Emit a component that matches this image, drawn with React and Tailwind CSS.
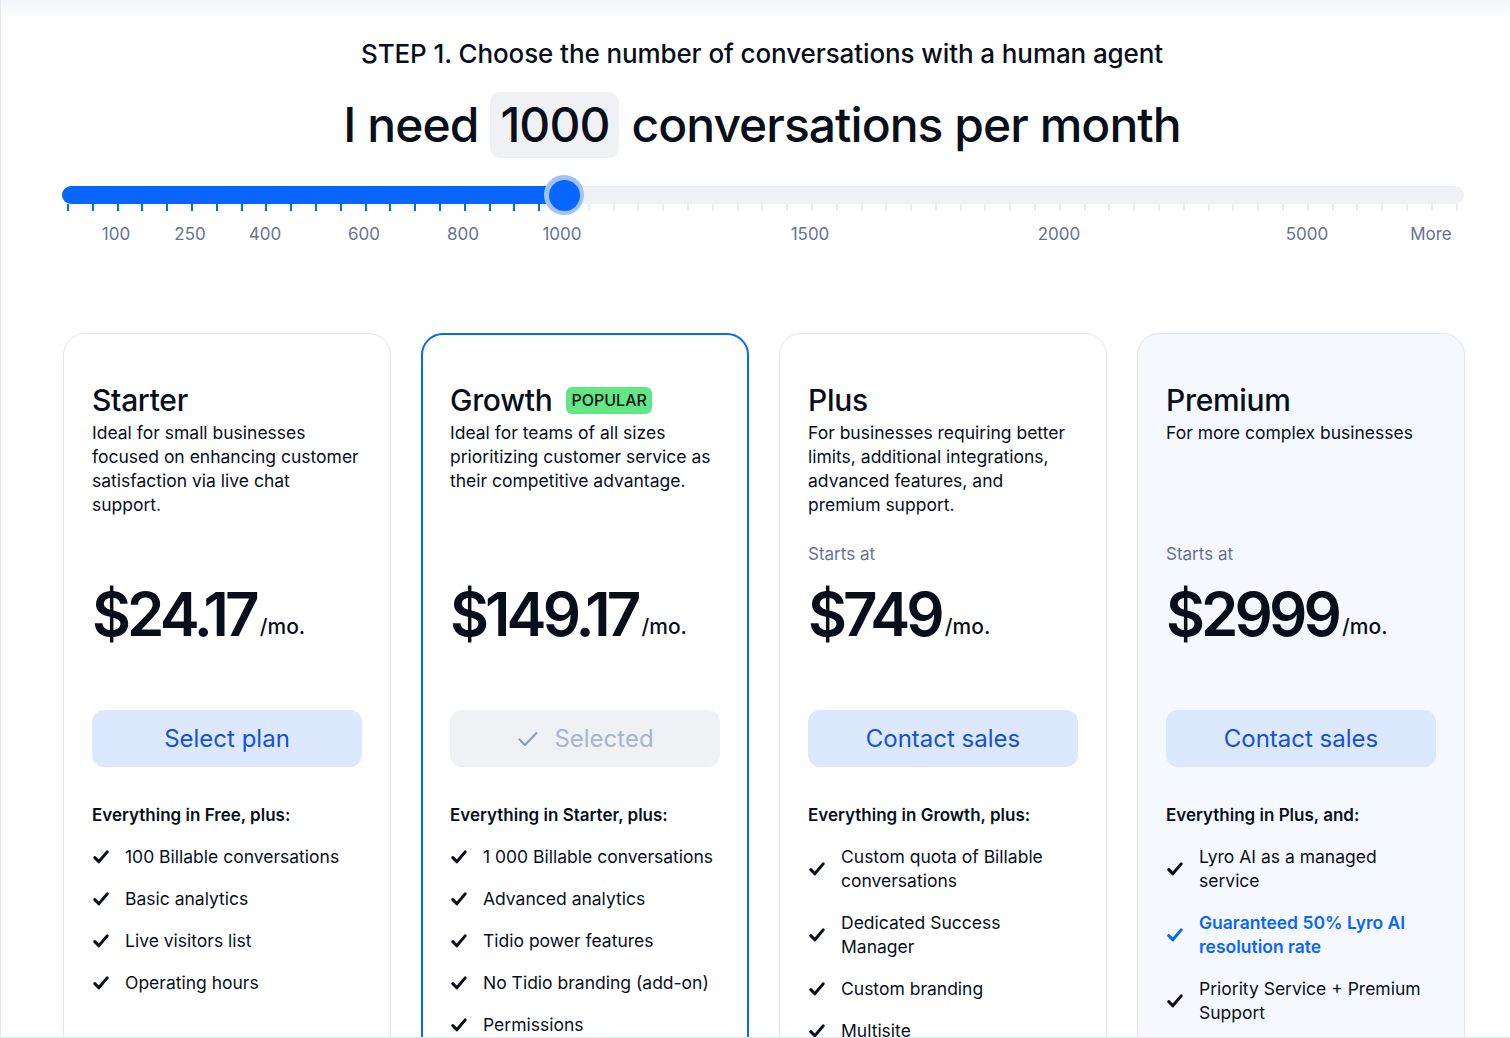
import React from "react";

const labels = [
  { t: "100", x: 54 },
  { t: "250", x: 128 },
  { t: "400", x: 203 },
  { t: "600", x: 302 },
  { t: "800", x: 401 },
  { t: "1000", x: 500 },
  { t: "1500", x: 748 },
  { t: "2000", x: 997 },
  { t: "5000", x: 1245 },
  { t: "More", x: 1369 },
];

function Check({ blue }) {
  return (
    <svg width="16" height="16" viewBox="0 0 16 16" fill="none" className="shrink-0">
      <path
        d="M1.8 8.6 L5.8 12.8 L14.2 2.9"
        stroke={blue ? "#0866ff" : "#080f1a"}
        strokeWidth="3"
        strokeLinecap="round"
        strokeLinejoin="round"
      />
    </svg>
  );
}

const plans = [
  {
    name: "Starter",
    desc: "Ideal for small businesses focused on enhancing customer satisfaction via live chat support.",
    starts: false,
    price: "$24.17",
    btn: "Select plan",
    head: "Everything in Free, plus:",
    items: ["100 Billable conversations", "Basic analytics", "Live visitors list", "Operating hours"],
  },
  {
    name: "Growth",
    popular: true,
    selected: true,
    desc: "Ideal for teams of all sizes prioritizing customer service as their competitive advantage.",
    starts: false,
    price: "$149.17",
    btn: "Selected",
    head: "Everything in Starter, plus:",
    items: [
      "1 000 Billable conversations",
      "Advanced analytics",
      "Tidio power features",
      "No Tidio branding (add-on)",
      "Permissions",
      "Integrations",
    ],
  },
  {
    name: "Plus",
    desc: "For businesses requiring better limits, additional integrations, advanced features, and premium support.",
    starts: true,
    price: "$749",
    btn: "Contact sales",
    head: "Everything in Growth, plus:",
    items: ["Custom quota of Billable conversations", "Dedicated Success Manager", "Custom branding", "Multisite"],
  },
  {
    name: "Premium",
    tinted: true,
    desc: "For more complex businesses",
    starts: true,
    price: "$2999",
    btn: "Contact sales",
    head: "Everything in Plus, and:",
    items: [
      "Lyro AI as a managed service",
      { t: "Guaranteed 50% Lyro AI resolution rate", blue: true },
      "Priority Service + Premium Support",
    ],
  },
];

function Card({ p }) {
  const border = p.selected
    ? "border-2 border-[#0866ff] px-[27px] pt-[47px]"
    : "border border-[#e1e6ee] px-[28px] pt-[48px]";
  const bg = p.tinted ? "bg-[#f5f8fe]" : "bg-white";
  return (
    <div className={`w-[328px] h-[760px] shrink-0 rounded-[22px] ${border} ${bg}`}>
      <div className="flex items-center gap-[14px] h-[36px]">
        <div className="text-[30px] leading-[36px] font-medium text-[#080f1a] tracking-[-0.01em]">{p.name}</div>
        {p.popular && (
          <div className="h-[27px] px-[5px] rounded-[6px] bg-[#5fe884] text-[16px] leading-[27px] font-medium text-[#080f1a]">
            POPULAR
          </div>
        )}
      </div>
      <div className="mt-[3px] h-[96px] text-[17.5px] leading-[24px] text-[#080f1a]">{p.desc}</div>
      <div className="mt-[25px] h-[24px] text-[17px] leading-[24px] text-[#647491]">{p.starts ? "Starts at" : ""}</div>
      <div className="mt-[13px] h-[70px] flex items-end gap-[4px]">
        <span className="text-[60px] leading-[70px] font-semibold tracking-[-0.065em] text-[#080f1a]">{p.price}</span>
        <span className="text-[21px] leading-[24px] mb-[10px] font-medium text-[#080f1a]">/mo.</span>
      </div>
      <div className="mt-[61px]">
        {p.selected ? (
          <div className="h-[57px] rounded-[12px] bg-[#eff1f5] flex items-center justify-center gap-[14px] text-[24px] text-[#a9b5cb]">
            <svg width="24" height="24" viewBox="0 0 24 24" fill="none">
              <path d="M3.5 12.5 L9 18 L20.5 6" stroke="#8d9bb5" strokeWidth="2.2" strokeLinecap="round" strokeLinejoin="round" />
            </svg>
            <span>Selected</span>
          </div>
        ) : (
          <div className="h-[57px] rounded-[12px] bg-[#dbe8fd] flex items-center justify-center text-[24px] text-[#1651d6]">
            {p.btn}
          </div>
        )}
      </div>
      <div className="mt-[36px] text-[17px] leading-[24px] font-semibold text-[#080f1a]">{p.head}</div>
      <div className="mt-[18px] flex flex-col gap-[18px]">
        {p.items.map((it, i) => {
          const t = typeof it === "string" ? it : it.t;
          const blue = typeof it !== "string" && it.blue;
          return (
            <div key={i} className="flex items-center gap-[16px] pl-[1px]">
              <Check blue={blue} />
              <div
                className={`w-[234px] text-[17.5px] leading-[24px] ${
                  blue ? "text-[#0866ff] font-semibold" : "text-[#080f1a]"
                }`}
              >
                {t}
              </div>
            </div>
          );
        })}
      </div>
    </div>
  );
}

export default function App() {
  const ticks = Array.from({ length: 57 }, (_, i) => i);
  return (
    <div
      className="h-[1038px] overflow-hidden bg-[linear-gradient(to_bottom,#f2f4f7,#ffffff_18px)] border-l border-b border-[#e2e8f2]"
      style={{ fontFamily: "Inter, 'Noto Sans', sans-serif" }}
    >
      <div className="pt-[38px] pl-[13px] text-center text-[26px] leading-[32px] font-medium text-[#080f1a] tracking-[-0.004em]">
        STEP 1. Choose the number of conversations with a human agent
      </div>
      <div className="mt-[22px] pl-[13px] flex items-center justify-center gap-[12px] text-[48px] leading-[66px] font-medium text-[#080f1a] tracking-[-0.02em]">
        <span>I need</span>
        <span className="h-[66px] px-[10px] rounded-[10px] bg-[#f0f1f5]">1000</span>
        <span>conversations per month</span>
      </div>

      <div className="ml-[61px] w-[1402px] mt-[28px]">
        <div className="relative h-[18px] rounded-full bg-[#eff1f5]">
          <div className="absolute left-0 top-0 h-[18px] w-[502px] rounded-l-full bg-[#0866ff]" />
          <div className="absolute top-full left-0 right-0 flex justify-between pl-[5px] pr-[6px]">
            {ticks.map((i) => (
              <div key={i} className={`w-[2px] h-[7px] ${i <= 20 ? "bg-[#0866ff]" : "bg-[#e9ecf1]"}`} />
            ))}
          </div>
          <div className="absolute left-[482px] top-[-11px] w-[40px] h-[40px] rounded-full bg-[#a2c2fd] flex items-center justify-center">
            <div className="w-[31px] h-[31px] rounded-full bg-[#0866ff]" />
          </div>
        </div>
        <div className="relative h-[46px] mt-[4px] text-[17px] text-[#647491]">
          {labels.map((l) => (
            <span
              key={l.t}
              className="absolute top-[14px] -translate-x-1/2 leading-[24px]"
              style={{ left: l.x }}
            >
              {l.t}
            </span>
          ))}
        </div>
      </div>

      <div className="ml-[62px] mt-[79px] flex gap-[30px]">
        {plans.map((p) => (
          <Card key={p.name} p={p} />
        ))}
      </div>
    </div>
  );
}
